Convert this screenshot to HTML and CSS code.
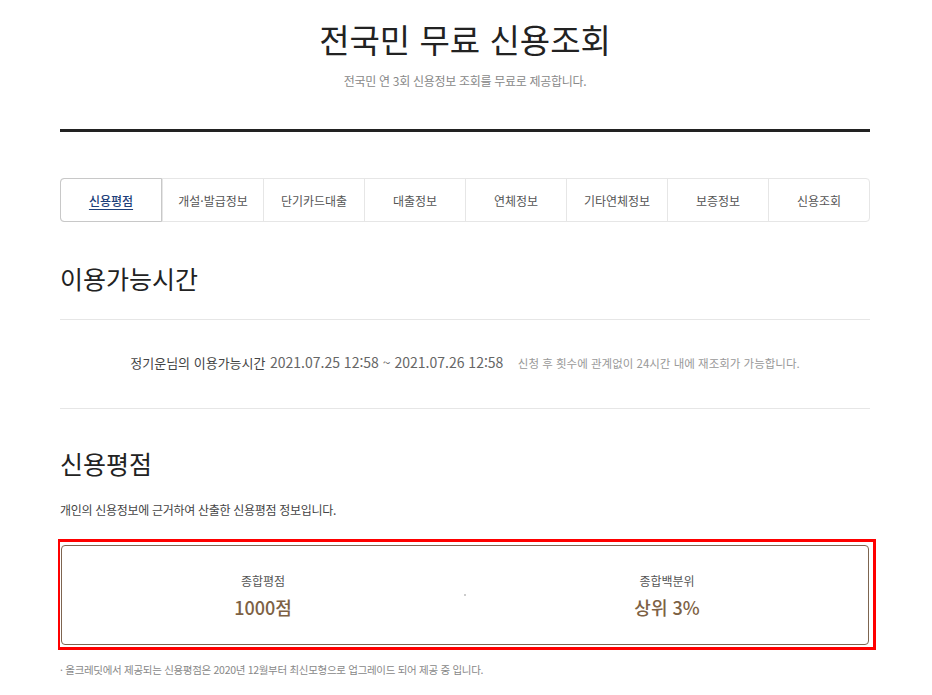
FILE: index.html
```html
<!DOCTYPE html>
<html lang="ko">

<head>
    <meta charset="UTF-8">
    <meta name="viewport" content="width=device-width, initial-scale=1.0">
    <title>전국민 무료 신용조회</title>
    <link rel="stylesheet" href="styles.css">
</head>

<body>
    <div class="container">
        <div class="top">
            <h1 class="title">전국민 무료 신용조회</h1>
            <p class="sub">전국민 연 3회 신용정보 조회를 무료로 제공합니다.</p>
        </div>

        <ul class="tabs">
            <li class="tab active"><a href="#">신용평점</a></li>
            <li class="tab"><a href="#">개설·발급정보</a></li>
            <li class="tab"><a href="#">단기카드대출</a></li>
            <li class="tab"><a href="#">대출정보</a></li>
            <li class="tab"><a href="#">연체정보</a></li>
            <li class="tab"><a href="#">기타연체정보</a></li>
            <li class="tab"><a href="#">보증정보</a></li>
            <li class="tab"><a href="#">신용조회</a></li>
        </ul>

        <h2 class="sec-title">이용가능시간</h2>
        <div class="time-row">
            <span class="who">정기운님의 이용가능시간</span>
            <span class="date">2021.07.25 12:58 ~ 2021.07.26 12:58</span>
            <span class="note">신청 후 횟수에 관계없이 24시간 내에 재조회가 가능합니다.</span>
        </div>

        <h2 class="sec-title score-title">신용평점</h2>
        <p class="desc">개인의 신용정보에 근거하여 산출한 신용평점 정보입니다.</p>

        <div class="mark">
            <div class="score-box">
                <div class="score-item">
                    <div class="label">종합평점</div>
                    <div class="value">1000점</div>
                </div>
                <div class="dot"></div>
                <div class="score-item">
                    <div class="label">종합백분위</div>
                    <div class="value">상위 3%</div>
                </div>
            </div>
        </div>

        <p class="foot">· 올크레딧에서 제공되는 신용평점은 2020년 12월부터 최신모형으로 업그레이드 되어 제공 중 입니다.</p>
    </div>
</body>

</html>
```

FILE: styles.css
```css
body{
    margin: 0;
    background: #fff;
    font-family: "Noto Sans CJK KR", "Noto Sans", sans-serif;
    color: #222;
}
.container{
    width: 810px;
    margin-left: 60px;
}
.top{
    text-align: center;
    padding-top: 15px;
    padding-bottom: 40px;
    border-bottom: 3px solid #222;
}
.title{
    margin: 0;
    font-size: 33px;
    font-weight: 400;
    line-height: 48px;
    color: #222;
}
.sub{
    margin: 10px 0 0;
    font-size: 12px;
    line-height: 16px;
    color: #888;
    letter-spacing: -0.3px;
}
.tabs{
    list-style: none;
    margin: 46px 0 0;
    padding: 0;
    display: flex;
    height: 44px;
    border: 1px solid #e6e6e6;
    border-radius: 4px;
    box-sizing: border-box;
}
.tab{
    flex: 1;
    display: flex;
    align-items: center;
    justify-content: center;
    border-left: 1px solid #e6e6e6;
}
.tab:first-child{
    border-left: none;
}
.tab a{
    font-size: 12px;
    color: #555;
    text-decoration: none;
}
.tab.active{
    margin: -1px 0 -1px -1px;
    border: 1px solid #c8c8c8;
    border-radius: 4px 0 0 4px;
}
.tab.active a{
    color: #1d3f7a;
    font-weight: 500;
    text-decoration: underline;
    text-underline-offset: 3px;
}
.sec-title{
    margin: 38px 0 0;
    font-size: 25px;
    font-weight: 400;
    line-height: 36px;
    padding-bottom: 23px;
    border-bottom: 1px solid #e6e6e6;
}
.time-row{
    text-align: center;
    padding: 30px 0 34px;
    border-bottom: 1px solid #e6e6e6;
    line-height: 22px;
}
.who{
    font-size: 13px;
    color: #444;
}
.date{
    font-size: 14px;
    color: #666;
}
.note{
    margin-left: 10px;
    font-size: 11.5px;
    color: #999;
}
.score-title{
    margin-top: 36px;
    padding-bottom: 0;
    border-bottom: none;
}
.desc{
    margin: 20px 0 0;
    font-size: 12px;
    color: #444;
    line-height: 18px;
    letter-spacing: -0.3px;
}
.mark{
    margin: 20px -6px 0 -2px;
    padding: 3px 4px 2px 0;
    border: 3px solid #f00;
    border-left-width: 2px;
}
.score-box{
    margin-left: 1px;
    height: 100px;
    display: flex;
    align-items: center;
    border: 1px solid #7d6550;
    border-radius: 4px;
    box-sizing: border-box;
}
.score-item{
    flex: 1;
    text-align: center;
}
.label{
    font-size: 12px;
    color: #555;
    line-height: 18px;
}
.value{
    margin-top: 5px;
    font-size: 18px;
    font-weight: 500;
    color: #7d6144;
    line-height: 24px;
}
.dot{
    width: 2px;
    height: 2px;
    background: #ccc;
}
.foot{
    margin: 12px 0 0;
    font-size: 10.5px;
    color: #888;
    line-height: 16px;
    letter-spacing: -0.3px;
}
```
